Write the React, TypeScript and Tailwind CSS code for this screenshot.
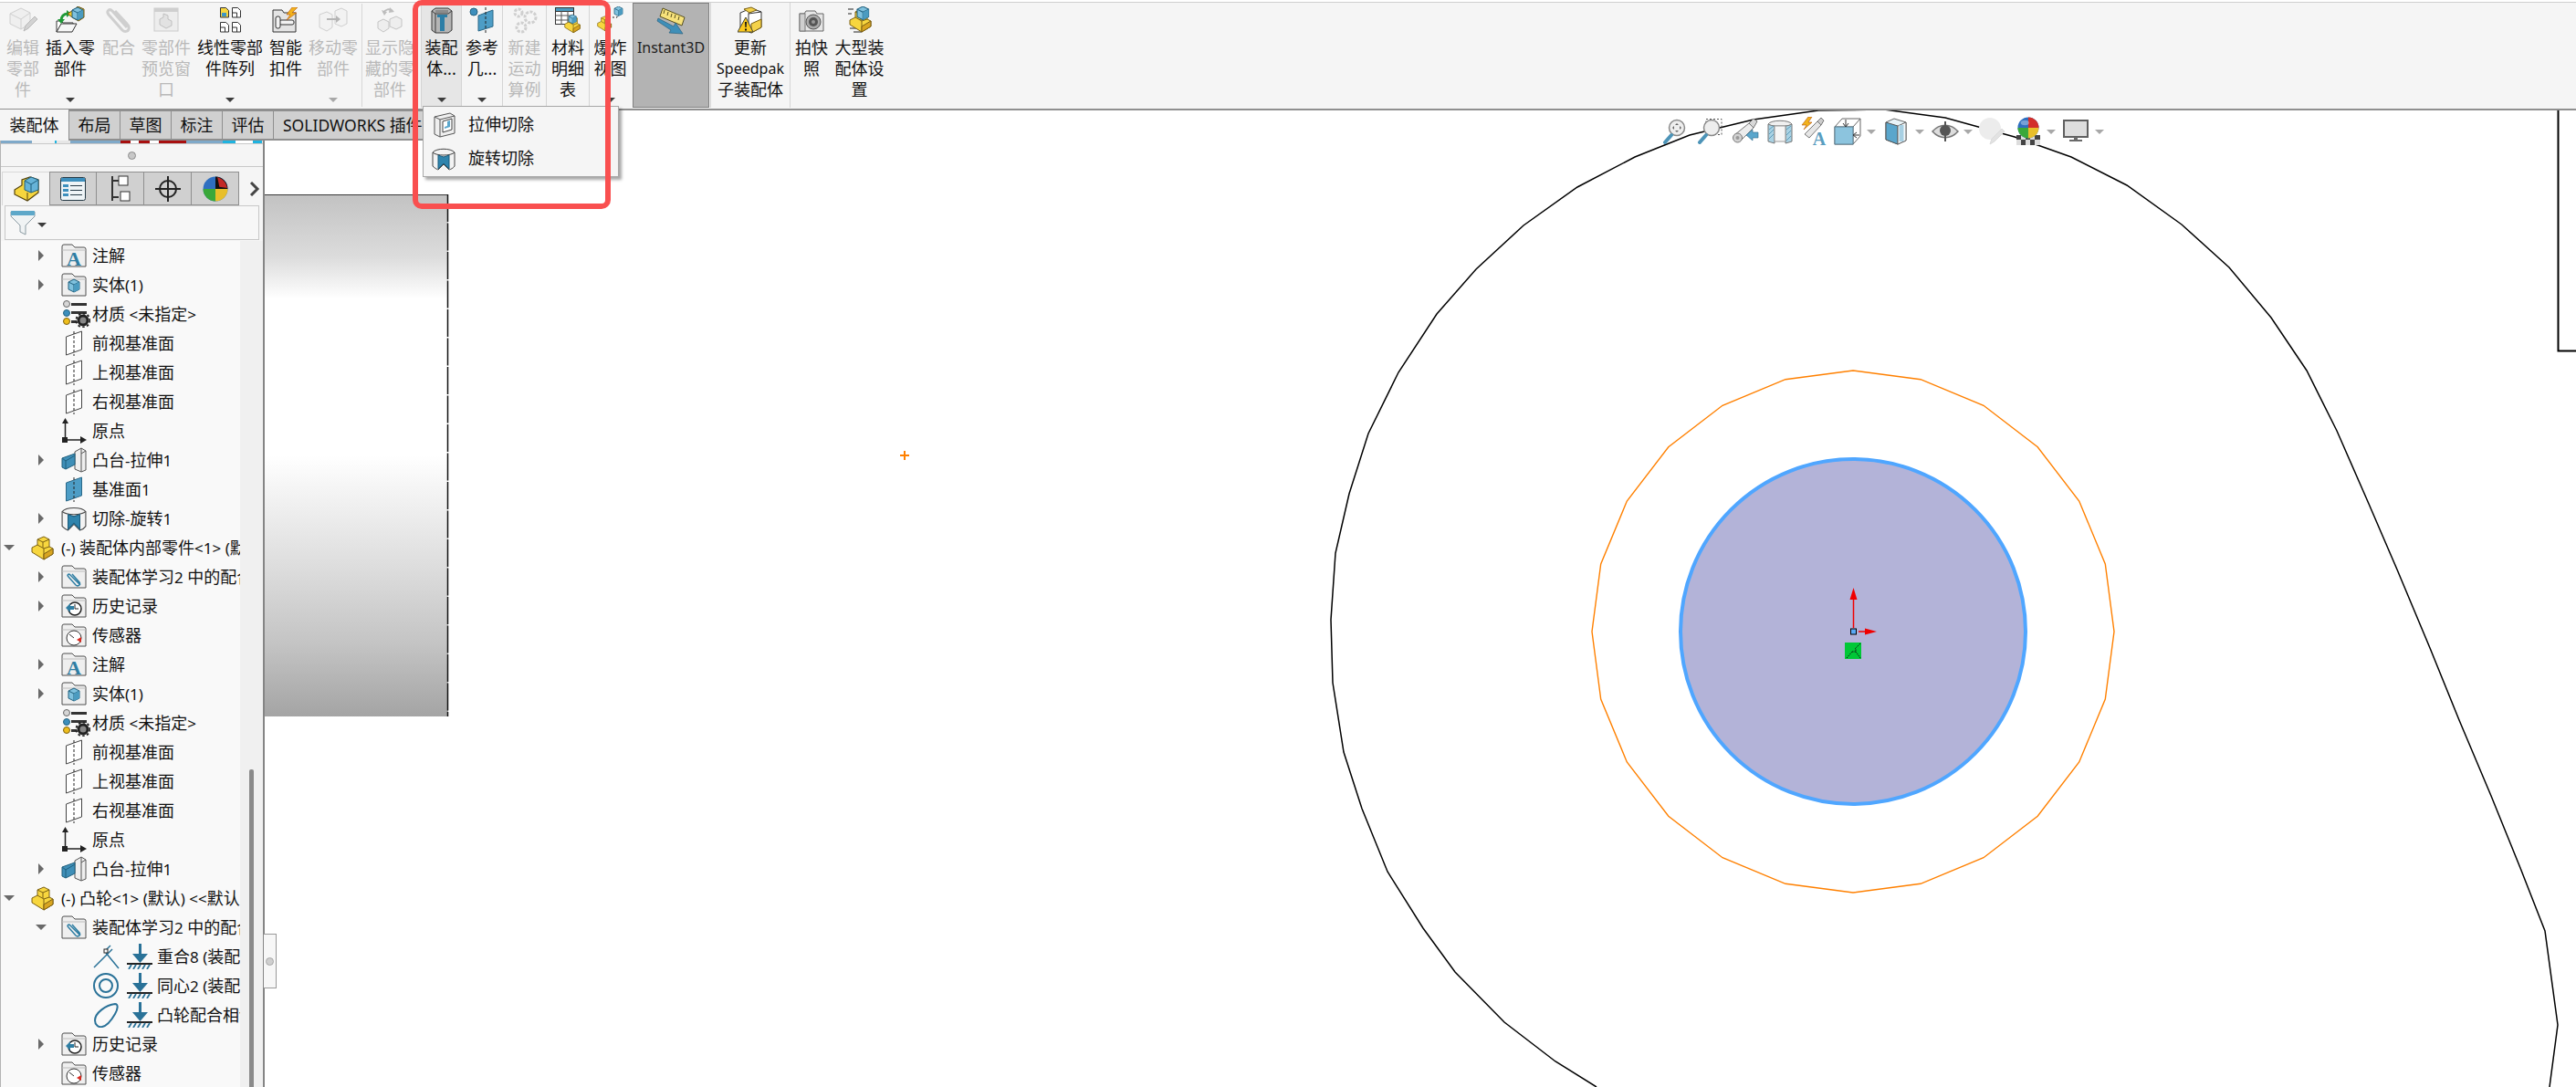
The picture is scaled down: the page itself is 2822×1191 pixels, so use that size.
import React from 'react';

// ---------- small helpers ----------
function Label({ text }: { text: string }) {
  // the latin runs are a bit smaller than the chinese ones in the original
  const parts = text.split(/([\u3000-\u9fff]+)/).filter(Boolean);
  return (
    <>
      {parts.map((p, i) =>
        /[\u3000-\u9fff]/.test(p) ? <span key={i}>{p}</span> : <span key={i} className="text-[17px]">{p}</span>
      )}
    </>
  );
}

function Caret({ color = 'dark' }: { color?: 'dark' | 'light' }) {
  if (color === 'light') return <span className="block h-0 w-0 shrink-0 border-x-[5px] border-t-[5px] border-x-transparent border-t-[#a8a8a8]" />;
  return <span className="block h-0 w-0 shrink-0 border-x-[5px] border-t-[5px] border-x-transparent border-t-[#3c3c3c]" />;
}

// ---------- ribbon icons ----------
const Cube = ({ x, y, s = 1 }: { x: number; y: number; s?: number }) => (
  <g transform={`translate(${x} ${y}) scale(${s})`}>
    <path d="M0 3 6 0l6 3v8l-6 3-6-3z" fill="#7fc1de" stroke="#1f5f7d" />
    <path d="M0 3l6 3 6-3" fill="none" stroke="#1f5f7d" />
    <path d="M6 6v8" stroke="#1f5f7d" />
    <path d="M6 6l6-3v8l-6 3z" fill="#4b9bc0" />
  </g>
);

const YellowPart = ({ x = 0, y = 0, s = 1 }: { x?: number; y?: number; s?: number }) => (
  <g transform={`translate(${x} ${y}) scale(${s})`}>
    <path d="M1 13 7 10V4l7-3 6 3v8l4 2v6l-10 6L1 18z" fill="#f7d63e" stroke="#7a5f12" strokeLinejoin="round" />
    <path d="M7 4l6 3 7-3M13 7v6M7 10l7 4 6-2M14 14v12" fill="none" stroke="#7a5f12" />
    <path d="M14 20l10-6v6l-10 6z" fill="#d9a520" stroke="#7a5f12" strokeLinejoin="round" />
  </g>
);

const EditPart = () => (
  <svg width="32" height="30" viewBox="0 0 32 30">
    <path d="M2 8 14 2l10 5v12l-10 6-12-6z" fill="#efefef" stroke="#cfcfcf" />
    <path d="M2 8l12 6 10-7M14 14v11" fill="none" stroke="#cfcfcf" />
    <path d="M17 27l2-6 10-10 3 3-10 10z" fill="#d2d2d2" stroke="#b9b9b9" />
  </svg>
);
const InsertPart = () => (
  <svg width="32" height="30" viewBox="0 0 32 30">
    <path d="M1 28V16h5l2 2h11v2H6z" fill="#fff" stroke="#333" />
    <path d="M1 28l5-9h17l-5 9z" fill="#f6f6f6" stroke="#333" />
    <path d="M6 16c0-5 3-8 7-8" fill="none" stroke="#1f9a37" strokeWidth="3" />
    <path d="M2 14l4 5 4-5zM12 4v8l5-4z" fill="#1f9a37" />
    <path d="M13 8l8-5 3-3 7 3v9l-6 4-7-4z" fill="#f4c82c" stroke="#6d5510" />
    <Cube x={18} y={1} />
  </svg>
);
const Clip = () => (
  <svg width="30" height="30" viewBox="0 0 30 30">
    <path d="M25 23 9 5C6 2 2 5 5 9l15 17c2 2 6 2 7-1s-1-5-2-6L12 5" fill="none" stroke="#cfcfcf" strokeWidth="3" transform="translate(-1 0)" />
  </svg>
);
const PreviewWin = () => (
  <svg width="28" height="28" viewBox="0 0 28 28">
    <rect x="1" y="1" width="26" height="25" fill="#ededed" stroke="#cbcbcb" />
    <rect x="1" y="1" width="26" height="4" fill="#cfcfcf" />
    <path d="M7 19v-6l4-2V7l5 2v4l4 2v5l-6 3z" fill="#e2e2e2" stroke="#c0c0c0" />
  </svg>
);
const PatternFile = ({ x, y, on }: { x: number; y: number; on?: boolean }) => (
  <g transform={`translate(${x} ${y})`}>
    <path d="M.5.5h6l3 3V11H.5z" fill={on ? '#f7d63e' : '#fff'} stroke="#333" />
    {on && <rect x="2" y="6" width="5" height="4" fill="#3d97c4" />}
    {!on && <path d="M.5 6h5v5" fill="none" stroke="#333" />}
  </g>
);
const LinearPattern = () => (
  <svg width="24" height="30" viewBox="0 0 24 30">
    <PatternFile x={1} y={1} on />
    <PatternFile x={14} y={1} />
    <PatternFile x={1} y={17} />
    <PatternFile x={14} y={17} />
  </svg>
);
const Fastener = () => (
  <svg width="30" height="28" viewBox="0 0 30 28">
    <path d="M1 27V3h10l2 3h13v21z" fill="#e4e4e4" stroke="#333" />
    <rect x="8" y="14" width="16" height="5" rx="2" fill="#f2f2f2" stroke="#333" />
    <rect x="4" y="10" width="5" height="13" rx="2" fill="#f2f2f2" stroke="#333" />
    <path d="M22 0l-6 8h4l-4 6 11-8h-5l6-6z" fill="#f2b21c" stroke="#b3530e" strokeWidth=".6" />
  </svg>
);
const MovePart = () => (
  <svg width="32" height="28" viewBox="0 0 32 28">
    <path d="M1 8l8-3 6 3v14l-6 4-8-4z" fill="#f2f2f2" stroke="#cfcfcf" />
    <path d="M18 4l7-3 6 3v14l-6 3-7-3z" fill="#f2f2f2" stroke="#cfcfcf" />
    <path d="M9 13h11" stroke="#b5b5b5" strokeWidth="2" />
    <path d="M19 9l5 4-5 4z" fill="#b5b5b5" />
  </svg>
);
const ShowHidden = () => (
  <svg width="30" height="30" viewBox="0 0 30 30">
    <path d="M8 7c2-4 7-5 10-2" fill="none" stroke="#bdbdbd" strokeWidth="2" />
    <path d="M15 1l5 5-6 1zM6 4l3 6 3-4z" fill="#bdbdbd" />
    <path d="M2 17l6-3 6 3v7l-6 4-6-4z" fill="#eee" stroke="#c4c4c4" />
    <path d="M15 14l7-3 6 3v8l-6 3-7-3z" fill="#eee" stroke="#c4c4c4" />
  </svg>
);
const AsmFeature = () => (
  <svg width="26" height="30" viewBox="0 0 24 30">
    <path d="M1 5 5 2h14l4 3v21l-4 3H5l-4-3z" fill="#b5b5b5" stroke="#3a3a3a" />
    <path d="M1 5l4 3h14l4-3M5 8v21" fill="none" stroke="#3a3a3a" />
    <path d="M7 9h11v3h-3v15h-5V12H7z" fill="#2d7ea6" />
    <path d="M5 4h14v3H5z" fill="#8c8c8c" />
  </svg>
);
const RefGeo = () => (
  <svg width="30" height="30" viewBox="0 0 28 30">
    <circle cx="5" cy="6" r="4" fill="#3d8fbd" stroke="#24617f" />
    <path d="M10 10 26 4v18l-16 5z" fill="#4d9dc6" stroke="#2b6888" />
    <path d="M18 1v28" stroke="#222" strokeDasharray="3 2" />
  </svg>
);
const Gears = () => (
  <svg width="30" height="30" viewBox="0 0 28 30" fill="none" stroke="#cfcfcf">
    <circle cx="7" cy="7" r="4" strokeWidth="3" strokeDasharray="3 1.5" />
    <circle cx="20" cy="12" r="6" strokeWidth="3" strokeDasharray="3 1.5" />
    <circle cx="10" cy="23" r="5" strokeWidth="3" strokeDasharray="3 1.5" />
  </svg>
);
const Bom = () => (
  <svg width="30" height="30" viewBox="0 0 28 30">
    <rect x=".5" y="1.5" width="20" height="18" fill="#fff" stroke="#333" />
    <rect x=".5" y="1.5" width="20" height="4" fill="#4b9bc0" stroke="#333" />
    <path d="M.5 10h20M.5 15h20M7 5v15M14 5v15" stroke="#555" />
    <g transform="translate(10 10) scale(.72)"><YellowPart /></g>
    <Cube x={15} y={9} s={0.7} />
  </svg>
);
const Explode = () => (
  <svg width="32" height="30" viewBox="0 0 30 30">
    <g transform="translate(0 10) scale(.65)"><YellowPart /></g>
    <path d="M13 12h9V5" fill="none" stroke="#222" strokeDasharray="2 2" />
    <Cube x={19} y={0} s={0.75} />
  </svg>
);
const Instant3d = () => (
  <svg width="32" height="30" viewBox="0 0 30 30">
    <path d="M6 1l24 10-3 9L3 10z" fill="#f7e27b" stroke="#58501e" />
    <path d="M8 3l-1 4M12 5l-1 4M16 7l-1 4M20 8l-1 4M24 10l-1 4" stroke="#58501e" />
    <path d="M1 12l17 9 2-4 8 12-15-1 2-3L0 15z" fill="#3f8fb8" stroke="#2a6180" strokeWidth=".7" />
  </svg>
);
const Speedpak = () => (
  <svg width="28" height="30" viewBox="0 0 28 30">
    <path d="M3 7l12-5 11 4v17l-11 6-12-5z" fill="#fff" stroke="#333" />
    <path d="M15 2l-3 6 14-2M12 8v14" fill="none" stroke="#333" />
    <path d="M7 3l8-2 6 3-8 3z" fill="#f4d24a" stroke="#7a5f12" />
    <path d="M15 19l11-5v9l-11 6z" fill="#f4d24a" stroke="#7a5f12" />
    <path d="M9 12 17 28H0z" fill="#fbc91c" stroke="#443" />
    <path d="M8 17h2l-.4 6H8.400zM8 24.500h2v2H8z" fill="#111" />
  </svg>
);
const Camera = () => (
  <svg width="28" height="26" viewBox="0 0 28 26">
    <path d="M1 6h5l2-3h10l2 3h7v19H1z" fill="#e6e6e6" stroke="#666" />
    <rect x="1" y="6" width="6" height="19" fill="#cfcfcf" stroke="#777" />
    <circle cx="16" cy="15" r="8" fill="#aaa" stroke="#555" />
    <circle cx="16" cy="15" r="5" fill="#555" />
    <circle cx="16" cy="15" r="2" fill="#999" />
  </svg>
);
const LargeAsm = () => (
  <svg width="28" height="30" viewBox="0 0 28 30">
    <path d="M1 3h6M1 8h4M3 24h7M7 28h9" stroke="#222" />
    <g transform="translate(2 2) scale(1)"><YellowPart /></g>
    <Cube x={11} y={0} s={1.05} />
  </svg>
);
const ExtrudeCut = () => (
  <svg width="24" height="28" viewBox="0 0 24 28">
    <path d="M1 5l17-4 5 3v19L7 27l-6-3z" fill="#efefef" stroke="#555" />
    <path d="M1 5l6 3 16-4M7 8v19" fill="none" stroke="#555" />
    <path d="M10 10l10-3v12l-10 3z" fill="#fff" stroke="#444" />
    <path d="M12 18l6-2V9l-3 1v5l-3 1z" fill="#5aa6cc" />
  </svg>
);
const RevolveCut = ({ w = 26 }: { w?: number }) => (
  <svg width={w} height={w} viewBox="0 0 26 26">
    <path d="M1 6v15c3 3 6 4 6 4l6-6 6 6s4-1 6-4V6C21 1 5 1 1 6z" fill="#f3f3f3" stroke="#444" />
    <path d="M1 6c4 4 20 4 24 0" fill="none" stroke="#444" />
    <path d="M7 9l6 2 6-2v15l-6-6-6 6z" fill="#2f84ad" stroke="#1c5c7c" />
  </svg>
);

// ---------- tree icons ----------
const FolderBase = ({ children }: { children?: React.ReactNode }) => (
  <svg width="28" height="26" viewBox="0 0 28 26">
    <path d="M1 25V3q0-2 2-2h9l3 3h10q2 0 2 2v19z" fill="#efefef" stroke="#4e4e4e" />
    <path d="M1 7h26" stroke="#bdbdbd" />
    {children}
  </svg>
);
const FolderA = () => (
  <FolderBase>
    <text x="14" y="24" textAnchor="middle" fontFamily="Liberation Serif, serif" fontWeight="700" fontSize="22" fill="#2f7ea3">A</text>
  </FolderBase>
);
const FolderCube = () => (
  <FolderBase><Cube x={8} y={7} s={1} /></FolderBase>
);
const FolderClip = () => (
  <FolderBase>
    <path d="M21 22 10 11c-2-2-4 0-2 2l8 9c2 2 6 0 4-3l-8-9" fill="none" stroke="#2f7ea3" strokeWidth="1.500" />
  </FolderBase>
);
const FolderHistory = () => (
  <FolderBase>
    <circle cx="15" cy="16" r="7" fill="#fff" stroke="#222" strokeWidth="1.500" />
    <path d="M15 11v5h4" fill="none" stroke="#222" />
    <path d="M5 15l5-5v3h4v4h-4v3z" fill="#2f7ea3" />
  </FolderBase>
);
const FolderSensor = () => (
  <FolderBase>
    <circle cx="14" cy="16" r="8" fill="#fff" stroke="#333" />
    <path d="M9 12l5 4" stroke="#333" />
    <path d="M17 18l5-3v6z" fill="#d8281e" />
  </FolderBase>
);
const MaterialIco = () => (
  <svg width="32" height="30" viewBox="0 0 32 30">
    <circle cx="6" cy="4" r="3.500" fill="#d6d6d6" stroke="#666" />
    <circle cx="6" cy="14" r="3.500" fill="#3d8fbd" stroke="#25627f" />
    <circle cx="6" cy="23" r="3.500" fill="#efbe1c" stroke="#7a5f12" />
    <path d="M11 3h17v3H11zM11 12h17v3H11zM11 22h6v3h-6z" fill="#333" />
    <circle cx="24" cy="22" r="5" fill="#888" stroke="#222" strokeWidth="3" />
    <circle cx="24" cy="22" r="7.500" fill="none" stroke="#222" strokeWidth="2" strokeDasharray="2.500 2.500" />
  </svg>
);
const PlaneIco = ({ blue }: { blue?: boolean }) => (
  <svg width="28" height="28" viewBox="0 0 28 28">
    <path d="M5.500 7 22.500 1v20L5.500 27z" fill={blue ? '#4d9dc6' : '#fff'} stroke={blue ? '#2b6888' : '#444'} />
    <path d="M14 1v27" stroke="#222" strokeDasharray="3 2" />
  </svg>
);
const OriginIco = () => (
  <svg width="28" height="28" viewBox="0 0 28 28">
    <path d="M4.500 5v19H22" fill="none" stroke="#222" strokeWidth="1.500" />
    <path d="M4.500 0 8 6H1zM28 24l-7 4v-8z" fill="#222" />
    <rect x="1" y="21" width="6" height="6" fill="#222" />
  </svg>
);
const BossIco = () => (
  <svg width="28" height="28" viewBox="0 0 28 28">
    <path d="M15 5l7-4 5 3v21l-5 2-7-3z" fill="#efefef" stroke="#555" />
    <path d="M22 1v6l5-3M22 7v20" fill="none" stroke="#555" />
    <path d="M1 12l14-5v12L5 24l-4-2z" fill="#3f8fb8" stroke="#1f5f7d" />
    <path d="M1 12l4 3 10-6M5 15v9" fill="none" stroke="#1f5f7d" />
  </svg>
);
const MateCoincident = () => (
  <svg width="30" height="28" viewBox="0 0 30 28" fill="none" stroke="#2a7298" strokeWidth="1.500">
    <path d="M1 26 21 6M14 10l14 17" />
    <path d="M14 7l5-5" />
    <rect x="12" y="6" width="4" height="4" fill="#fff" stroke="#222" strokeWidth="1" />
  </svg>
);
const MateConcentric = () => (
  <svg width="30" height="28" viewBox="0 0 30 28" fill="none" stroke="#2a7298" strokeWidth="2">
    <circle cx="14" cy="14" r="13" />
    <circle cx="14" cy="14" r="7" />
  </svg>
);
const MateCam = () => (
  <svg width="30" height="28" viewBox="0 0 30 28" fill="none" stroke="#2a7298" strokeWidth="2">
    <path d="M2 20c0-8 12-17 22-18 4 0 3 6 0 11-4 7-9 13-14 14-4 1-8-2-8-7z" />
  </svg>
);
const FixedMate = () => (
  <svg width="30" height="28" viewBox="0 0 30 28">
    <path d="M14 0h3v13h-3z" fill="#2a7298" />
    <path d="M7 11h17l-8.500 10z" fill="#2a7298" />
    <path d="M1 22h28" stroke="#222" strokeWidth="2" />
    <path d="M3 28l3-5M8 28l3-5M13 28l3-5M18 28l3-5M23 28l3-5" stroke="#2a7298" strokeWidth="1.800" />
  </svg>
);

// ---------- panel tab icons ----------
const FeatureTabIco = () => (
  <svg width="28" height="28" viewBox="0 0 28 28">
    <path d="M1 15l8-5V4l9-3 9 3v14l-12 9-14-7z" fill="#f7d63e" stroke="#54430c" strokeWidth="1.200" />
    <path d="M15 18v9" stroke="#54430c" />
    <path d="M12 5l7-4 8 3v11l-8 3-7-3z" fill="#66b3d8" stroke="#1f5f7d" />
    <path d="M12 5l7 4 8-5M19 9v9" fill="none" stroke="#1f5f7d" />
  </svg>
);
const PropTabIco = () => (
  <svg width="28" height="26" viewBox="0 0 28 26">
    <rect x=".5" y=".5" width="27" height="25" rx="2" fill="#eef4f7" stroke="#263a46" />
    <rect x="1" y="1" width="26" height="4" fill="#3d8fbd" />
    <path d="M3 8h6v3H3zM3 13h6v3H3zM3 18h6v3H3z" fill="#3d8fbd" />
    <path d="M11 9.500h13M11 14.500h13M11 19.500h13" stroke="#263a46" />
  </svg>
);
const ConfigTabIco = () => (
  <svg width="24" height="30" viewBox="0 0 24 30">
    <path d="M3 1v27M3 6h7M3 24h7" fill="none" stroke="#333" strokeWidth="2" />
    <rect x="10" y="1" width="10" height="10" fill="#fff" stroke="#333" />
    <rect x="12" y="18" width="10" height="10" fill="#fff" stroke="#333" />
  </svg>
);
const TargetTabIco = () => (
  <svg width="28" height="28" viewBox="0 0 28 28" fill="none" stroke="#222" strokeWidth="2">
    <circle cx="14" cy="14" r="9" />
    <path d="M0 14h28M14 0v28" />
  </svg>
);
const Ball = ({ size = 26 }: { size?: number }) => (
  <svg width={size} height={size} viewBox="0 0 26 26">
    <circle cx="13" cy="13" r="12.500" fill="#2f6fc0" />
    <path d="M13 13V.5A12.500 12.500 0 0 1 25.500 13z" fill="#d32f2a" />
    <path d="M13 13H.5A12.500 12.500 0 0 0 13 25.500z" fill="#3aa83a" />
    <path d="M13 13h12.500A12.500 12.500 0 0 1 13 25.500z" fill="#e8bf2a" />
    <ellipse cx="9" cy="7" rx="5" ry="3" fill="#fff" opacity=".35" />
  </svg>
);
const DisplayTabIco = () => (
  <svg width="28" height="28" viewBox="0 0 26 26">
    <circle cx="13" cy="13" r="12.500" fill="#2f6fc0" />
    <path d="M13 13V.5A12.500 12.500 0 0 1 25.500 13z" fill="#111" />
    <path d="M15 1c6 2 9 6 10 11l-8-1z" fill="#c32a26" />
    <path d="M13 13H.5A12.500 12.500 0 0 0 13 25.500z" fill="#3aa83a" />
    <path d="M13 13h12.500A12.500 12.500 0 0 1 13 25.500z" fill="#e8bf2a" />
  </svg>
);
const Funnel = () => (
  <svg width="28" height="28" viewBox="0 0 28 28">
    <path d="M1 2h26v5L17 17v10l-6-3v-7L1 7z" fill="#f0f3f4" stroke="#8a9aa2" />
    <rect x="1" y="1" width="26" height="5" rx="1" fill="#5ea8c9" />
  </svg>
);

// ---------- heads-up toolbar icons ----------
const Magnifier = ({ area }: { area?: boolean }) => (
  <svg width="28" height="28" viewBox="0 0 28 28">
    {area && <rect x="10" y=".5" width="17" height="17" fill="none" stroke="#555" strokeDasharray="2 2" />}
    <circle cx="16" cy="10" r="8.500" fill="#eee" stroke="#8a8a8a" strokeWidth="1.500" />
    {!area && <path d="M16 5l2 2h-4zM16 15l2-2h-4zM11 10l2-2v4zM21 10l-2-2v4z" fill="#666" />}
    <path d="M3 26l7-8" stroke="#4d94b8" strokeWidth="4" strokeLinecap="round" />
  </svg>
);
const Binoc = () => (
  <svg width="30" height="30" viewBox="0 0 30 30">
    <path d="M3 19 19 6l5 5-14 14z" fill="#ececec" stroke="#777" />
    <path d="M19 6l5-5 4 3-4 7z" fill="#d8d8d8" stroke="#777" />
    <ellipse cx="6.500" cy="22" rx="5" ry="5" fill="#d2d2d2" stroke="#777" />
    <circle cx="6.500" cy="22" r="2" fill="#999" />
    <path d="M16 19l7-6v3h6v6h-6v3z" fill="#5aa6cc" stroke="#2b6888" strokeWidth=".6" />
  </svg>
);
const SectionView = () => (
  <svg width="28" height="28" viewBox="0 0 28 28">
    <path d="M1 6c3-5 23-5 26 0-3 2-6 2-7 2H8C7 8 4 8 1 6z" fill="#f0f0f0" stroke="#777" />
    <path d="M1 6c2 1 5 2 7 2v19l-7-2z" fill="#a9d2e4" stroke="#777" />
    <path d="M20 8c2 0 5-1 7-2v19l-7 2z" fill="#a9d2e4" stroke="#777" />
    <path d="M8 8h12v17H8z" fill="#f6f6f6" stroke="#999" />
    <path d="M2 12l5-4M2 17l5-5M2 22l5-5M21 12l5-4M21 18l5-5M21 24l5-5" stroke="#4a8fb0" strokeWidth=".8" />
  </svg>
);
const DynAnnot = () => (
  <svg width="30" height="32" viewBox="0 0 30 32">
    <path d="M4 19 18 5l4 4L9 23z" fill="#e6e6e6" stroke="#777" />
    <path d="M18 5l4-4 3 3-3 5z" fill="#ccc" stroke="#777" />
    <path d="M8 0 1 9h5l-3 5 9-8H8l4-6z" fill="#f2b21c" stroke="#b3530e" strokeWidth=".6" />
    <text x="20" y="31" textAnchor="middle" fontFamily="Liberation Serif, serif" fontWeight="700" fontSize="20" fill="#5a9dbf">A</text>
  </svg>
);
const ViewOrient = () => (
  <svg width="30" height="30" viewBox="0 0 30 30">
    <path d="M1 10l8-9h20v19l-8 9H1z" fill="#fff" stroke="#666" />
    <path d="M1 10h20l8-9M21 10v19" fill="none" stroke="#666" />
    <rect x="1" y="10" width="20" height="19" fill="#8cc4de" stroke="#5c7f90" />
    <path d="M13 2v7M10 6l3 4 3-4M28 19h-7M25 16l-4 3 4 3" fill="none" stroke="#333" />
  </svg>
);
const DisplayStyle = () => (
  <svg width="24" height="30" viewBox="0 0 24 30">
    <path d="M1 5l9-4 13 4v20l-9 4-13-5z" fill="#eaf4f8" stroke="#666" />
    <path d="M1 5l13 4v20L1 24z" fill="#5aa6cc" stroke="#555" />
    <path d="M14 9l9-4v20l-9 4z" fill="#f4f8fa" stroke="#666" />
    <path d="M18 8v18" stroke="#a8d0e3" strokeWidth="5" />
  </svg>
);
const Eye = () => (
  <svg width="30" height="22" viewBox="0 0 30 22">
    <path d="M1 11c8-9 20-9 28 0-8 9-20 9-28 0z" fill="#ddd" stroke="#777" strokeWidth="1.500" />
    <circle cx="15" cy="10" r="6" fill="#555" />
    <path d="M15 0v22" stroke="#555" strokeWidth="2" />
  </svg>
);
const Appearance = () => (
  <svg width="32" height="32" viewBox="0 0 32 32">
    <circle cx="14" cy="13" r="12" fill="#ececec" />
    <path d="M14 30l2-6 11-11 3 3-11 11z" fill="#e2e2e2" stroke="#dcdcdc" />
  </svg>
);
const Scene = () => (
  <svg width="28" height="32" viewBox="0 0 28 32">
    <rect x="1" y="20" width="26" height="11" fill="#444" />
    <path d="M6 20h5v5H6zM16 20h5v5h-5zM1 25h5v6H1zM11 25h5v6h-5zM21 25h6v6h-6z" fill="#ddd" />
    <g transform="translate(2 0) scale(.92)"><Ball /></g>
  </svg>
);
const Monitor = () => (
  <svg width="28" height="26" viewBox="0 0 28 26">
    <rect x="1" y="1" width="26" height="18" fill="#dedede" stroke="#5f5f5f" strokeWidth="2" />
    <path d="M12 19h4v3h-4zM7 22h14v2H7z" fill="#6a6a6a" />
  </svg>
);

// ---------- data ----------
interface RibbonBtn {
  lines: string[];
  icon: React.ReactNode;
  w: string;
  off?: boolean;
  caret?: boolean;
  extra?: string;
}

const groupOne: RibbonBtn[] = [
  { lines: ['编辑', '零部', '件'], icon: <EditPart />, w: 'w-[50px]', off: true },
  { lines: ['插入零', '部件'], icon: <InsertPart />, w: 'w-[54px]', caret: true },
  { lines: ['配合'], icon: <Clip />, w: 'w-[52px]', off: true },
  { lines: ['零部件', '预览窗', '口'], icon: <PreviewWin />, w: 'w-[52px]', off: true },
  { lines: ['线性零部', '件阵列'], icon: <LinearPattern />, w: 'w-[88px]', caret: true },
  { lines: ['智能', '扣件'], icon: <Fastener />, w: 'w-[34px]' },
  { lines: ['移动零', '部件'], icon: <MovePart />, w: 'w-[66px]', off: true, caret: true, extra: 'pl-[4px]' },
];

const groupTwo: RibbonBtn[] = [
  { lines: ['装配', '体...'], icon: <AsmFeature />, w: 'w-[43px]', caret: true, extra: 'bg-[#e6e6e6]' },
  { lines: ['参考', '几...'], icon: <RefGeo />, w: 'w-[44px]', caret: true },
  { lines: ['新建', '运动', '算例'], icon: <Gears />, w: 'w-[47px]', off: true },
  { lines: ['材料', '明细', '表'], icon: <Bom />, w: 'w-[46px]' },
  { lines: ['爆炸', '视图'], icon: <Explode />, w: 'w-[45px]', caret: true },
];

type Arrow = 'right' | 'down' | undefined;
interface TreeRow {
  label: string;
  icon?: React.ReactNode;
  arrow?: Arrow;
  top?: boolean;
  mate?: React.ReactNode;
}

const partRows = (withCut: boolean): TreeRow[] => [
  { label: '注解', icon: <FolderA />, arrow: 'right' },
  { label: '实体(1)', icon: <FolderCube />, arrow: 'right' },
  { label: '材质 <未指定>', icon: <MaterialIco /> },
  { label: '前视基准面', icon: <PlaneIco /> },
  { label: '上视基准面', icon: <PlaneIco /> },
  { label: '右视基准面', icon: <PlaneIco /> },
  { label: '原点', icon: <OriginIco /> },
  { label: '凸台-拉伸1', icon: <BossIco />, arrow: 'right' },
  ...(withCut
    ? ([
        { label: '基准面1', icon: <PlaneIco blue /> },
        { label: '切除-旋转1', icon: <RevolveCut w={28} />, arrow: 'right' },
      ] as TreeRow[])
    : []),
];

const treeRows: TreeRow[] = [
  ...partRows(true),
  { label: '(-) 装配体内部零件<1> (默认) <<默认>', top: true, arrow: 'down' },
  { label: '装配体学习2 中的配合', icon: <FolderClip />, arrow: 'right' },
  { label: '历史记录', icon: <FolderHistory />, arrow: 'right' },
  { label: '传感器', icon: <FolderSensor /> },
  ...partRows(false),
  { label: '(-) 凸轮<1> (默认) <<默认>_显示状态', top: true, arrow: 'down' },
  { label: '装配体学习2 中的配合', icon: <FolderClip />, arrow: 'down' },
  { label: '重合8 (装配体内部零件', mate: <MateCoincident /> },
  { label: '同心2 (装配体内部零件', mate: <MateConcentric /> },
  { label: '凸轮配合相切1 (装配体', mate: <MateCam /> },
  { label: '历史记录', icon: <FolderHistory />, arrow: 'right' },
  { label: '传感器', icon: <FolderSensor /> },
];

const tabs = [
  { label: '布局', w: 'w-[56px]' },
  { label: '草图', w: 'w-[56px]' },
  { label: '标注', w: 'w-[56px]' },
  { label: '评估', w: 'w-[56px]' },
];

const hud: { w: string; icon?: React.ReactNode; caret?: boolean }[] = [
  { w: 'w-[37px]', icon: <Magnifier /> },
  { w: 'w-[39px]', icon: <Magnifier area /> },
  { w: 'w-[39px]', icon: <Binoc /> },
  { w: 'w-[37px]', icon: <SectionView /> },
  { w: 'w-[40px]', icon: <DynAnnot /> },
  { w: 'w-[32px]', icon: <ViewOrient /> },
  { w: 'w-[20px]', caret: true },
  { w: 'w-[34px]', icon: <DisplayStyle /> },
  { w: 'w-[18px]', caret: true },
  { w: 'w-[38px]', icon: <Eye /> },
  { w: 'w-[12px]', caret: true },
  { w: 'w-[40px]', icon: <Appearance /> },
  { w: 'w-[40px]', icon: <Scene /> },
  { w: 'w-[10px]', caret: true },
  { w: 'w-[43px]', icon: <Monitor /> },
  { w: 'w-[10px]', caret: true },
];

// traced outline of the cam, in page pixels
const camOutline = [
  [1749, 1191], [1704, 1163], [1648, 1120], [1594, 1065], [1559, 1017], [1520, 955], [1492, 886], [1472, 824],
  [1460, 748], [1458, 679], [1463, 606], [1478, 541], [1499, 475], [1532, 408], [1574, 344], [1617, 295],
  [1669, 247], [1728, 205], [1791, 172], [1851, 148], [1921, 131], [1992, 121], [2064, 120], [2131, 129],
  [2207, 150], [2269, 172], [2330, 203], [2390, 246], [2442, 293], [2488, 348], [2527, 406], [2560, 472],
  [2595, 552], [2626, 624], [2662, 710], [2694, 789], [2729, 872], [2761, 951], [2788, 1020], [2802, 1123], [2793, 1191],
]
  .map((p) => p.join(','))
  .join(' ');

const orangePoly = Array.from({ length: 24 }, (_, i) => {
  const a = (i * Math.PI) / 12;
  return `${(2030 + 286 * Math.sin(a)).toFixed(1)},${(692 - 286 * Math.cos(a)).toFixed(1)}`;
}).join(' ');

function RibbonButton({ b }: { b: RibbonBtn }) {
  return (
    <div className={`flex h-full shrink-0 flex-col items-center ${b.w} ${b.extra ?? ''}`}>
      <div className="flex h-[38px] w-full items-center justify-center">{b.icon}</div>
      <div className={`whitespace-nowrap text-center text-[18px] leading-[23px] ${b.off ? 'text-[#b9b9b9]' : 'text-[#111]'}`}>
        {b.lines.map((l) => (
          <div key={l}>{l}</div>
        ))}
      </div>
      {b.caret && (
        <div className="mt-auto mb-[6px]">
          <Caret color={b.off ? 'light' : 'dark'} />
        </div>
      )}
    </div>
  );
}

function TreeArrow({ arrow, top }: { arrow: Arrow; top?: boolean }) {
  if (arrow === 'right') return <span className="block h-0 w-0 border-y-[6px] border-l-[6px] border-y-transparent border-l-[#6a6a6a]" />;
  if (arrow === 'down') {
    return <span className={`block h-0 w-0 border-x-[6px] border-t-[6px] border-x-transparent border-t-[#6a6a6a] ${top ? '' : '-ml-[3px]'}`} />;
  }
  return null;
}

function Row({ row }: { row: TreeRow }) {
  if (row.top) {
    return (
      <div className="flex h-[32px] items-center">
        <div className="w-[33px] shrink-0 pl-[3px]">
          <TreeArrow arrow={row.arrow} top />
        </div>
        <svg width="25" height="27" viewBox="0 0 25 27" className="shrink-0"><YellowPart /></svg>
        <span className="ml-[8px]"><Label text={row.label} /></span>
      </div>
    );
  }
  if (row.mate) {
    return (
      <div className="flex h-[32px] items-center">
        <div className="w-[101px] shrink-0" />
        <div className="w-[36px] shrink-0">{row.mate}</div>
        <div className="w-[34px] shrink-0"><FixedMate /></div>
        <span><Label text={row.label} /></span>
      </div>
    );
  }
  return (
    <div className="flex h-[32px] items-center">
      <div className="w-[66px] shrink-0 pl-[41px]">
        <TreeArrow arrow={row.arrow} />
      </div>
      <div className="flex w-[34px] shrink-0 items-center">{row.icon}</div>
      <span><Label text={row.label} /></span>
    </div>
  );
}

export default function App() {
  return (
    <div className="relative flex h-[1191px] w-[2822px] flex-col overflow-hidden bg-white font-['Noto_Sans','Noto_Sans_CJK_SC',sans-serif] text-[18px] text-[#111]">
      {/* ribbon */}
      <div className="h-[2px] shrink-0 bg-white" />
      <div className="flex h-[119px] shrink-0 items-stretch border-t border-b-2 border-t-[#cfcfcf] border-b-[#8f8f8f] bg-[#f5f5f5] pb-[1px]">
        {groupOne.map((b) => (
          <RibbonButton key={b.lines.join('')} b={b} />
        ))}
        <div className="my-[1px] w-px bg-[#d6d6d6]" />
        <RibbonButton
          b={{ lines: ['显示隐', '藏的零', '部件'], icon: <ShowHidden />, w: 'w-[60px]', off: true }}
        />
        <div className="w-[4px]" />
        {groupTwo.map((b) => (
          <div key={b.lines.join('')} className="flex border-l border-[#d4d4d4]">
            <RibbonButton b={b} />
          </div>
        ))}
        <div className="ml-[2px] flex w-[84px] shrink-0 flex-col items-center border border-[#808080] bg-[#b3b3b3]">
          <div className="flex h-[37px] items-center justify-center"><Instant3d /></div>
          <div className="text-[16px] leading-[23px] text-[#222]">Instant3D</div>
        </div>
        <div className="ml-[1px] w-px bg-[#d6d6d6]" />
        <div className="flex h-full w-[86px] shrink-0 flex-col items-center">
          <div className="flex h-[38px] w-full items-center justify-center"><Speedpak /></div>
          <div className="whitespace-nowrap text-center text-[18px] leading-[23px] text-[#111]">
            <div>更新</div>
            <div className="text-[16px]">Speedpak</div>
            <div>子装配体</div>
          </div>
        </div>
        <div className="w-px bg-[#d6d6d6]" />
        <RibbonButton b={{ lines: ['拍快', '照'], icon: <Camera />, w: 'w-[46px]' }} />
        <RibbonButton b={{ lines: ['大型装', '配体设', '置'], icon: <LargeAsm />, w: 'w-[59px]' }} />
      </div>

      <div className="flex min-h-0 flex-1">
        {/* feature manager */}
        <div className="mt-[32px] flex w-[290px] shrink-0 flex-col border-l border-r-2 border-l-[#b4b4b4] border-r-[#858585] bg-[#f5f5f5]">
          <div className="mt-[1px] flex h-[3px] shrink-0 bg-[#e4e4e4]">
            <div className="w-[34px] bg-[#7fa9c9]" />
            <div className="w-[25px] bg-[#f2f2f2]" />
            <div className="w-[2px] bg-[#1fb3e0]" />
            <div className="w-[15px] bg-[#e6e6e6]" />
            <div className="w-[55px] bg-[#7fa9c9]" />
            <div className="w-[11px] bg-[#a80f0f]" />
            <div className="w-[9px] bg-white" />
            <div className="w-[12px] bg-[#a80f0f]" />
            <div className="w-[10px] bg-white" />
            <div className="w-[30px] bg-[#a80f0f]" />
            <div className="w-[40px] bg-[#7fa9c9]" />
            <div className="w-[14px] bg-[#1fb3e0]" />
            <div className="w-[19px] bg-white" />
            <div className="w-[10px] bg-[#1fb3e0]" />
          </div>
          <div className="h-[1px] shrink-0 bg-[#c8c8c8]" />
          <div className="flex h-[25px] shrink-0 items-center justify-center border-b border-[#c8c8c8]">
            <div className="h-[9px] w-[9px] rounded-full border border-[#8c8c8c] bg-[#c8c8c8]" />
          </div>
          <div className="flex h-[42px] shrink-0 items-end pl-px">
            <div className="flex h-[37px] w-[52px] items-center justify-center border-l border-t border-[#d8d8d8] bg-[#f5f5f5]"><FeatureTabIco /></div>
            <div className="flex h-[37px] w-[52px] items-center justify-center border border-[#8f8f8f] bg-[#d0d0d0]"><PropTabIco /></div>
            <div className="flex h-[37px] w-[52px] items-center justify-center border-y border-r border-[#8f8f8f] bg-[#d0d0d0]"><ConfigTabIco /></div>
            <div className="flex h-[37px] w-[52px] items-center justify-center border-y border-r border-[#8f8f8f] bg-[#d0d0d0]"><TargetTabIco /></div>
            <div className="flex h-[37px] w-[52px] items-center justify-center border-y border-r border-[#8f8f8f] bg-[#d0d0d0]"><DisplayTabIco /></div>
            <div className="flex h-[37px] flex-1 items-center justify-center pl-[8px]">
              <svg width="12" height="16" viewBox="0 0 12 16"><path d="M2 1l7 7-7 7" fill="none" stroke="#444" strokeWidth="3" /></svg>
            </div>
          </div>
          <div className="mx-[4px] mb-[1px] flex h-[38px] w-[279px] shrink-0 items-center border border-[#c8c8c8] bg-[#f7f7f7] pl-[5px]">
            <Funnel />
            <div className="ml-[2px] mt-[4px]"><Caret /></div>
          </div>
          <div className="flex min-h-0 flex-1">
            <div className="w-[262px] overflow-hidden whitespace-nowrap bg-[#f9f9f9]">
              {treeRows.map((r, i) => (
                <Row key={i} row={r} />
              ))}
            </div>
            <div className="flex-1 bg-[#f0f0f0] pl-[10px] pt-[579px]">
              <div className="h-full w-[5px] rounded-t-[2px] bg-[#8a8a8a]" />
            </div>
          </div>
        </div>

        {/* graphics area */}
        <div className="relative min-w-0 flex-1 bg-white">
          <svg width="2532" height="1070" viewBox="290 121 2532 1070" className="block">
            <defs>
              <linearGradient id="body" x1="0" y1="0" x2="0" y2="1">
                <stop offset="0" stopColor="#c2c2c2" />
                <stop offset="0.12" stopColor="#dcdcdc" />
                <stop offset="0.18" stopColor="#f6f6f6" />
                <stop offset="0.2" stopColor="#ffffff" />
                <stop offset="0.5" stopColor="#ffffff" />
                <stop offset="0.58" stopColor="#f2f2f2" />
                <stop offset="0.72" stopColor="#dcdcdc" />
                <stop offset="0.86" stopColor="#c4c4c4" />
                <stop offset="1" stopColor="#a4a4a4" />
              </linearGradient>
            </defs>
            <rect x="290" y="213" width="201" height="572" fill="url(#body)" />
            <path d="M290 213.500H491" stroke="#3a3a3a" strokeWidth="1" />
            <path d="M490.500 213V785" stroke="#111" strokeWidth="1.500" strokeDasharray="30 1.500" />
            <path d="M2822 384.500H2802.500V121" fill="none" stroke="#000" strokeWidth="2" />
            <path d="M986 499h10M991 494v10" stroke="#ff8000" strokeWidth="2" />
            <polyline points={camOutline} fill="none" stroke="#000" strokeWidth="1.500" />
            <polygon points={orangePoly} fill="none" stroke="#ff8000" strokeWidth="1.400" />
            <circle cx="2030" cy="692" r="189" fill="#b3b3d8" stroke="#4fa6ff" strokeWidth="4" />
            <path d="M2030.500 688V655M2036 692h12" stroke="#f00000" strokeWidth="1.500" />
            <path d="M2030.500 644l4 13h-8zM2056 692l-13-3.500v7z" fill="#f00000" />
            <rect x="2027.500" y="689" width="6" height="6" fill="#5aaaf5" stroke="#000" strokeWidth="1" />
            <rect x="2021" y="704" width="18" height="18" fill="#00c837" />
            <path d="M2038 705 2032 711M2023 721 2029 714M2029 714h4v-3M2033 714l5 7" fill="none" stroke="#111" strokeWidth="1" strokeDasharray="1.500 1" />
          </svg>

          {/* heads-up view toolbar */}
          <div className="absolute left-[1526px] top-[4px] flex h-[38px] items-center">
            {hud.map((h, i) => (
              <div key={i} className={`flex shrink-0 items-center justify-center ${h.w}`}>
                {h.caret ? <Caret color="light" /> : h.icon}
              </div>
            ))}
          </div>

          {/* collapse handle of the side panel */}
          <div className="absolute -left-[1px] top-[902px] flex h-[60px] w-[14px] items-center justify-center border-y border-r border-[#9a9a9a] bg-[#f7f7f7]">
            <div className="h-[9px] w-[9px] rounded-full border border-[#a8a8a8] bg-[#cfcfcf]" />
          </div>
        </div>
      </div>

      {/* command manager tabs lie over the graphics area */}
      <div className="absolute left-0 top-[120px] flex h-[34px] items-stretch text-[18px]">
        <div className="flex w-[75px] items-center justify-center bg-[#f5f5f5]">装配体</div>
        {tabs.map((t) => (
          <div
            key={t.label}
            className={`flex items-center justify-center whitespace-nowrap border-y-2 border-l border-y-[#8f8f8f] border-l-[#8f8f8f] bg-[#d0d0d0] ${t.w}`}
          >
            {t.label}
          </div>
        ))}
        <div className="flex w-[180px] items-center whitespace-nowrap border-y-2 border-l border-y-[#8f8f8f] border-l-[#8f8f8f] bg-[#d0d0d0] pl-[10px]">
          <span className="text-[17.500px]">SOLIDWORKS&nbsp;</span>插件
        </div>
      </div>

      {/* dropdown of the assembly features button */}
      <div className="absolute left-[463px] top-[116px] flex h-[78px] w-[215px] flex-col justify-center border border-[#a8a8a8] bg-[#f5f5f5] shadow-[3px_3px_3px_rgba(0,0,0,0.35)]">
        <div className="flex h-[37px] items-center pl-[11px]">
          <div className="w-[38px]"><ExtrudeCut /></div>
          <span>拉伸切除</span>
        </div>
        <div className="flex h-[37px] items-center pl-[9px]">
          <div className="w-[40px]"><RevolveCut /></div>
          <span>旋转切除</span>
        </div>
      </div>

      {/* red annotation frame */}
      <div className="absolute left-[452px] top-0 h-[229px] w-[217px] rounded-[10px] border-[6px] border-[#f94f4f]" />
    </div>
  );
}
